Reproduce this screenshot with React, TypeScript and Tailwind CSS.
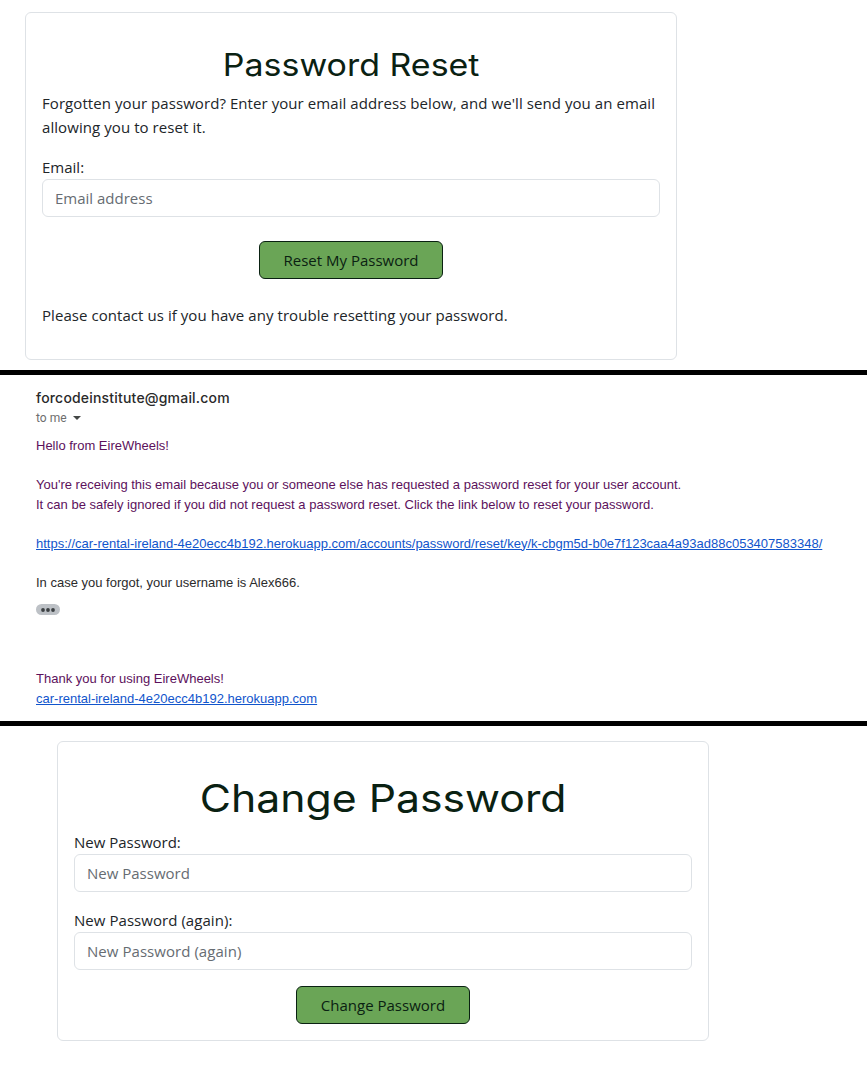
import React from "react";

type FieldProps = {
  id: string;
  label: string;
  placeholder: string;
  type: string;
};

function Field({ id, label, placeholder, type }: FieldProps) {
  return (
    <div className="flex flex-col items-start">
      <label htmlFor={id} className="h-6 whitespace-nowrap">
        {label}
      </label>
      <input
        id={id}
        type={type}
        placeholder={placeholder}
        className="h-[38px] w-full rounded-md border border-[#dee2e6] bg-white px-3 placeholder:text-[#666c72]"
      />
    </div>
  );
}

function ActionButton({ className, children }: { className: string; children: React.ReactNode }) {
  return (
    <button
      type="button"
      className={`flex h-[38px] items-center justify-center self-center whitespace-nowrap rounded-md border border-[#0a2112] bg-[#6aa556] text-[#0a2112] ${className}`}
    >
      {children}
    </button>
  );
}

const cardClass =
  "flex w-[652px] flex-col rounded-md border border-[#dee2e6] px-4 font-['Open_Sans','Noto_Sans',sans-serif] text-[15px] leading-6 text-[#212529]";

function PasswordReset() {
  return (
    <section className="h-[370px] pl-[25px] pt-3">
      <div className={`${cardClass} h-[348px] pt-8`}>
        <h2 className="mb-2 h-[38.4px] scale-x-[1.095] self-center whitespace-nowrap font-['Inter',sans-serif] text-[31px] font-normal leading-[39.4px] text-[#0a2112]">
          Password Reset
        </h2>
        <p className="mb-4 whitespace-nowrap tracking-[0.07px]">
          <span>Forgotten your password? Enter your email address below, and we'll send you an email</span>
          <br />
          <span>allowing you to reset it.</span>
        </p>
        <Field id="email" type="email" label="Email:" placeholder="Email address" />
        <ActionButton className="mt-6 w-[184px]">Reset My Password</ActionButton>
        <p className="mt-6 whitespace-nowrap tracking-[0.06px]">
          <span>Please contact us if you have any trouble resetting your password.</span>
        </p>
      </div>
    </section>
  );
}

function EmailMessage() {
  return (
    <section className="h-[356px] border-y-[5px] border-black pl-9 pt-[13px] font-['Liberation_Sans',Arial,sans-serif] text-[13px] leading-[19.5px] text-[#5c115c]">
      <div className="h-5 font-['Inter',sans-serif] text-sm font-medium leading-5 tracking-[0.19px] text-[#2a2a2a]">
        <span>forcodeinstitute@gmail.com</span>
      </div>
      <div className="flex h-5 items-center font-['Roboto',sans-serif] text-xs leading-5 text-[#6e6e6e]">
        <span>to me</span>
        <svg className="ml-[6px] h-1 w-2" viewBox="0 0 8 4" fill="#444746">
          <path d="M0 0h8L4 4z" />
        </svg>
      </div>
      <div className="mt-2 whitespace-nowrap">
        <p>Hello from EireWheels!</p>
        <p className="mt-[19.5px]">
          You're receiving this email because you or someone else has requested a password reset for your user account.
        </p>
        <p>
          It can be safely ignored if you did not request a password reset. Click the link below to reset your password.
        </p>
        <p className="mt-[19.5px]">
          <a href="#reset" className="text-[#1155cc] underline">
            https://car-rental-ireland-4e20ecc4b192.herokuapp.com/accounts/password/reset/key/k-cbgm5d-b0e7f123caa4a93ad88c053407583348/
          </a>
        </p>
        <p className="mt-[19.5px] text-[#2b2b2b]">In case you forgot, your username is Alex666.</p>
        <button type="button" aria-label="Show trimmed content" className="mt-3 flex h-[11px] w-6 items-center justify-center rounded-full bg-[#bdc1c6]">
          <svg className="h-1 w-[14px]" viewBox="0 0 14 4" fill="#3c4043">
            <circle cx="2" cy="2" r="1.9" />
            <circle cx="7" cy="2" r="1.9" />
            <circle cx="12" cy="2" r="1.9" />
          </svg>
        </button>
        <p className="mt-[54px]">Thank you for using EireWheels!</p>
        <p>
          <a href="#home" className="text-[#1155cc] underline">
            car-rental-ireland-4e20ecc4b192.herokuapp.com
          </a>
        </p>
      </div>
    </section>
  );
}

function ChangePassword() {
  return (
    <section className="h-[357px] pl-[57px] pt-[15px]">
      <div className={`${cardClass} h-[300px] pt-8`}>
        <h1 className="mb-2 h-12 scale-x-[1.11] self-center whitespace-nowrap font-['Inter',sans-serif] text-[38.5px] font-normal leading-[48px] text-[#0a2112]">
          Change Password
        </h1>
        <Field id="p1" type="password" label="New Password:" placeholder="New Password" />
        <div className="mt-4 tracking-[0.05px]">
          <Field id="p2" type="password" label="New Password (again):" placeholder="New Password (again)" />
        </div>
        <ActionButton className="mt-4 w-[174px]">Change Password</ActionButton>
      </div>
    </section>
  );
}

export default function App() {
  return (
    <main className="h-[1083px] w-[867px] overflow-hidden bg-white">
      <PasswordReset />
      <EmailMessage />
      <ChangePassword />
    </main>
  );
}
